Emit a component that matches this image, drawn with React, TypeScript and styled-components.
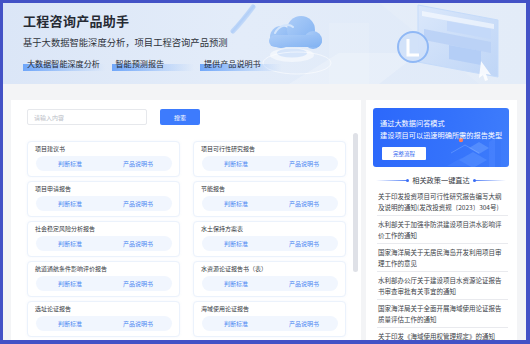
import styled, { createGlobalStyle } from "styled-components";

const GlobalStyle = createGlobalStyle`
  html, body {
    margin: 0;
    padding: 0;
    background: #ffffff;
  }
  * {
    box-sizing: border-box;
  }
  body {
    font-family: "Noto Sans CJK SC", "Noto Sans", sans-serif;
  }
`;

const Frame = styled.div`
  width: 530px;
  height: 344px;
  border-style: solid;
  border-color: #4352c6;
  border-width: 3px 4px 4px 3px;
  overflow: hidden;
  display: flex;
  flex-direction: column;
  background: #f3f4f6;
`;

const Header = styled.header`
  position: relative;
  flex-shrink: 0;
  height: 81px;
  padding: 10px 0 0 20px;
  background: linear-gradient(90deg, #dbe6f7 0%, #e3ecf9 45%, #e0eaf8 100%);
  overflow: hidden;
`;

const HeaderArt = styled.svg`
  position: absolute;
  left: 226px;
  top: 0;
`;

const Title = styled.h1`
  position: relative;
  margin: 0;
  font-size: 13px;
  line-height: 16px;
  font-weight: 700;
  color: #262a33;
  letter-spacing: 0.3px;
`;

const Subtitle = styled.p`
  position: relative;
  margin: 7px 0 0;
  font-size: 9.3px;
  line-height: 12px;
  color: #2f333b;
`;

const TagRow = styled.div`
  position: relative;
  display: flex;
  gap: 6.5px;
  margin-top: 11px;
`;

const Tag = styled.span`
  width: 82px;
  height: 12px;
  padding-left: 4px;
  font-size: 8.1px;
  line-height: 10px;
  color: #262a33;
  background: linear-gradient(90deg, rgba(84, 150, 250, 0.8) 0%, rgba(140, 185, 250, 0.45) 60%, rgba(200, 220, 250, 0) 100%) no-repeat;
  background-size: 100% 7px;
  background-position: 0 100%;
`;

const Main = styled.main`
  flex: 1;
  min-height: 0;
  display: flex;
  gap: 5px;
  padding: 16px 9px 0 8px;
`;

const LeftPanel = styled.section`
  position: relative;
  width: 350px;
  flex-shrink: 0;
  background: #ffffff;
  padding: 9px 0 0 16px;
`;

const ScrollThumb = styled.div`
  position: absolute;
  top: 33px;
  right: 3px;
  width: 5px;
  height: 139px;
  border-radius: 3px;
  background: #dfe1e7;
`;

const SearchRow = styled.div`
  display: flex;
  align-items: center;
  gap: 13px;
`;

const SearchInput = styled.input`
  width: 120px;
  height: 16px;
  border: 1px solid #e6e8ec;
  border-radius: 2px;
  padding: 0 6px;
  font-family: "Noto Sans CJK SC", sans-serif;
  font-size: 6px;
  color: #333;
  outline: none;
  &::placeholder {
    color: #b9bdc6;
  }
`;

const SearchButton = styled.button`
  width: 40px;
  height: 16px;
  border: 0;
  border-radius: 2px;
  background: #3d7bfd;
  color: #ffffff;
  font-family: "Noto Sans CJK SC", sans-serif;
  font-size: 6px;
  padding: 0;
`;

const CardGrid = styled.div`
  display: grid;
  grid-template-columns: 153px 153px;
  column-gap: 13px;
  row-gap: 4px;
  margin-top: 16px;
`;

const Card = styled.div`
  height: 36px;
  border: 1px solid #ebf2fc;
  border-radius: 4px;
  background: #ffffff;
  padding: 3px 7px 0 7px;
  box-shadow: 0 0 3px rgba(120, 160, 230, 0.08);
`;

const CardTitle = styled.div`
  font-size: 6px;
  line-height: 8px;
  color: #333740;
  white-space: nowrap;
`;

const CardActions = styled.div`
  display: flex;
  height: 15px;
  margin: 3px 0 0 1px;
  border-radius: 8px;
  background: #f1f6fe;
`;

const CardLink = styled.span`
  flex: 1;
  display: flex;
  align-items: center;
  justify-content: center;
  font-size: 6px;
  color: #4d89f2;
`;

const RightPanel = styled.aside`
  width: 151px;
  flex-shrink: 0;
  background: #ffffff;
  padding: 8px 8px 0 7px;
`;

const Banner = styled.div`
  position: relative;
  height: 59px;
  border-radius: 3px;
  padding: 10px 0 0 7px;
  background: linear-gradient(100deg, #2c68fb 0%, #3472fb 55%, #3f7dfb 100%);
  overflow: hidden;
`;

const BannerArt = styled.svg`
  position: absolute;
  right: 0;
  bottom: 0;
`;

const BannerLine = styled.div`
  position: relative;
  font-size: 7.2px;
  line-height: 11.5px;
  color: #ffffff;
  white-space: nowrap;
`;

const BannerButton = styled.button`
  position: relative;
  display: block;
  width: 44px;
  height: 13px;
  margin-top: 6px;
  margin-left: 2px;
  border: 0;
  border-radius: 1px;
  background: #ffffff;
  color: #3468f0;
  font-family: "Noto Sans CJK SC", sans-serif;
  font-size: 5.5px;
  padding: 0;
`;

const PolicyHeading = styled.div`
  display: flex;
  align-items: center;
  justify-content: center;
  gap: 4px;
  margin: 8px 0 3px;
  font-size: 7.2px;
  line-height: 10px;
  color: #30343c;
`;

const HeadingLine = styled.span<{ $flip?: boolean }>`
  position: relative;
  width: 32px;
  height: 1px;
  background: linear-gradient(
    ${(p) => (p.$flip ? "270deg" : "90deg")},
    rgba(59, 110, 245, 0) 0%,
    rgba(59, 110, 245, 0.9) 100%
  );
  &::after {
    content: "";
    position: absolute;
    top: -1px;
    ${(p) => (p.$flip ? "left: -1px;" : "right: -1px;")}
    width: 3px;
    height: 3px;
    border-radius: 50%;
    background: #3b6ef5;
  }
`;

const PolicyList = styled.ul`
  list-style: none;
  margin: 0 1px 0 4px;
  padding: 0;
`;

const PolicyItem = styled.li`
  padding: 3px 6px 3px 1px;
  border-bottom: 1px solid #e9eaee;
  font-size: 6.5px;
  line-height: 10.5px;
  color: #3a3e46;
`;

const cards: [string, string][] = [
  ["项目建议书", "项目可行性研究报告"],
  ["项目申请报告", "节能报告"],
  ["社会稳定风险分析报告", "水土保持方案表"],
  ["航道通航条件影响评价报告", "水资源论证报告书（表）"],
  ["选址论证报告", "海域使用论证报告"],
];

const policies = [
  "关于印发投资项目可行性研究报告编写大纲及说明的通知(发改投资规〔2023〕304号)",
  "水利部关于加强非防洪建设项目洪水影响评价工作的通知",
  "国家海洋局关于无居民海岛开发利用项目审理工作的意见",
  "水利部办公厅关于建设项目水资源论证报告书审查审批有关事宜的通知",
  "国家海洋局关于全面开展海域使用论证报告质量评估工作的通知",
  "关于印发《海域使用权管理规定》的通知",
];

const HeaderIllustration = () => (
  <HeaderArt width="300" height="81" viewBox="0 0 300 81">
    <defs>
      <linearGradient id="cloud" x1="0" y1="0" x2="1" y2="1">
        <stop offset="0" stopColor="#a9cbf8" />
        <stop offset="1" stopColor="#7aaef2" />
      </linearGradient>
      <linearGradient id="panel" x1="0" y1="0" x2="1" y2="1">
        <stop offset="0" stopColor="#dbe8fb" stopOpacity="0.95" />
        <stop offset="1" stopColor="#b6d0f6" stopOpacity="0.8" />
      </linearGradient>
      <linearGradient id="swoosh" x1="0" y1="0" x2="1" y2="1">
        <stop offset="0" stopColor="#ffffff" stopOpacity="0" />
        <stop offset="0.5" stopColor="#9cc2f7" stopOpacity="0.7" />
        <stop offset="1" stopColor="#ffffff" stopOpacity="0" />
      </linearGradient>
    </defs>
    {/* soft light stroke */}
    <path d="M4 28 C 12 20, 18 12, 24 4" stroke="url(#swoosh)" strokeWidth="5" fill="none" strokeLinecap="round" />
    {/* faint background planes */}
    <path d="M60 81 L110 50 L190 50 L150 81 Z" fill="#ffffff" opacity="0.22" />
    <path d="M150 0 L300 0 L300 81 L250 81 Z" fill="#ffffff" opacity="0.1" />
    <path d="M100 20 L140 20 L140 81 L100 81 Z" fill="#ffffff" opacity="0.12" />
    {/* cloud platform */}
    <ellipse cx="63" cy="52" rx="22" ry="7" fill="#ffffff" opacity="0.5" />
    <ellipse cx="63" cy="50" rx="15" ry="4.5" fill="#d6e5fa" />
    <ellipse cx="68" cy="60" rx="34" ry="11" fill="none" stroke="#ffffff" strokeOpacity="0.55" />
    {/* cloud */}
    <g fill="url(#cloud)" opacity="0.92">
      <circle cx="52" cy="34" r="11" />
      <circle cx="72" cy="27" r="14" />
      <circle cx="84" cy="37" r="9" />
      <rect x="40" y="32" width="53" height="12" rx="6" />
    </g>
    <path d="M46 30 C 50 22, 60 20, 64 24" stroke="#d3e5fc" strokeWidth="2" fill="none" strokeLinecap="round" />
    {/* browser panel */}
    <path d="M189 2 L269 17 L269 74 L189 59 Z" fill="url(#panel)" stroke="#c5dbfa" strokeWidth="1" />
    <path d="M193 8 L265 21 L265 26 L193 13 Z" fill="#ffffff" opacity="0.55" />
    <path d="M218 18 L262 26 L262 36 L218 28 Z" fill="#c3d8f8" opacity="0.9" />
    <path d="M195 26 L262 39 L262 50 L195 37 Z" fill="#b8d0f6" opacity="0.85" />
    <path d="M220 42 L252 48 L252 62 L220 56 Z" fill="#b0cbf6" opacity="0.85" />
    {/* circle badge */}
    <circle cx="184" cy="44" r="15" fill="#d2e2fa" stroke="#8cb6f5" strokeWidth="2" opacity="0.95" />
    <path d="M179 36 L179 52 L190 52" stroke="#ffffff" strokeWidth="3" fill="none" />
    {/* cursor */}
    <path d="M252 58 L262 72 L257 71 L259 77 L256 78 L254 72 L250 75 Z" fill="#ffffff" opacity="0.85" />
  </HeaderArt>
);

const BannerIllustration = () => (
  <BannerArt width="70" height="59" viewBox="0 0 70 59">
    <path d="M20 52 L34 44 L48 52 L34 60 Z" fill="#5b94ff" opacity="0.55" />
    <path d="M30 40 L40 34 L50 40 L40 46 Z" fill="#6ea2ff" opacity="0.5" />
    <path d="M50 34 L50 59 L56 59 L56 30 Z" fill="#4f88ff" opacity="0.45" />
    <path d="M56 30 L62 33 L62 59 L56 59 Z" fill="#3a76f8" opacity="0.5" />
    <path d="M8 58 L22 50 L36 58 Z" fill="#4a84ff" opacity="0.4" />
    <circle cx="22" cy="32" r="2.2" fill="#ff7a59" />
    <path d="M12 45 L26 37 L40 45" stroke="#8ab6ff" strokeWidth="0.6" fill="none" opacity="0.7" />
  </BannerArt>
);

export default function App() {
  return (
    <>
      <GlobalStyle />
      <Frame>
        <Header>
          <HeaderIllustration />
          <Title>工程咨询产品助手</Title>
          <Subtitle>基于大数据智能深度分析，项目工程咨询产品预测</Subtitle>
          <TagRow>
            <Tag>大数据智能深度分析</Tag>
            <Tag>智能预测报告</Tag>
            <Tag>提供产品说明书</Tag>
          </TagRow>
        </Header>
        <Main>
          <LeftPanel>
            <SearchRow>
              <SearchInput placeholder="请输入内容" />
              <SearchButton>搜索</SearchButton>
            </SearchRow>
            <CardGrid>
              {cards.flat().map((name) => (
                <Card key={name}>
                  <CardTitle>{name}</CardTitle>
                  <CardActions>
                    <CardLink>判断标准</CardLink>
                    <CardLink>产品说明书</CardLink>
                  </CardActions>
                </Card>
              ))}
            </CardGrid>
            <ScrollThumb />
          </LeftPanel>
          <RightPanel>
            <Banner>
              <BannerIllustration />
              <BannerLine>通过大数据问答模式</BannerLine>
              <BannerLine>建设项目可以迅速明确所需的报告类型</BannerLine>
              <BannerButton>完整流程</BannerButton>
            </Banner>
            <PolicyHeading>
              <HeadingLine />
              相关政策一键直达
              <HeadingLine $flip />
            </PolicyHeading>
            <PolicyList>
              {policies.map((p) => (
                <PolicyItem key={p}>{p}</PolicyItem>
              ))}
            </PolicyList>
          </RightPanel>
        </Main>
      </Frame>
    </>
  );
}
